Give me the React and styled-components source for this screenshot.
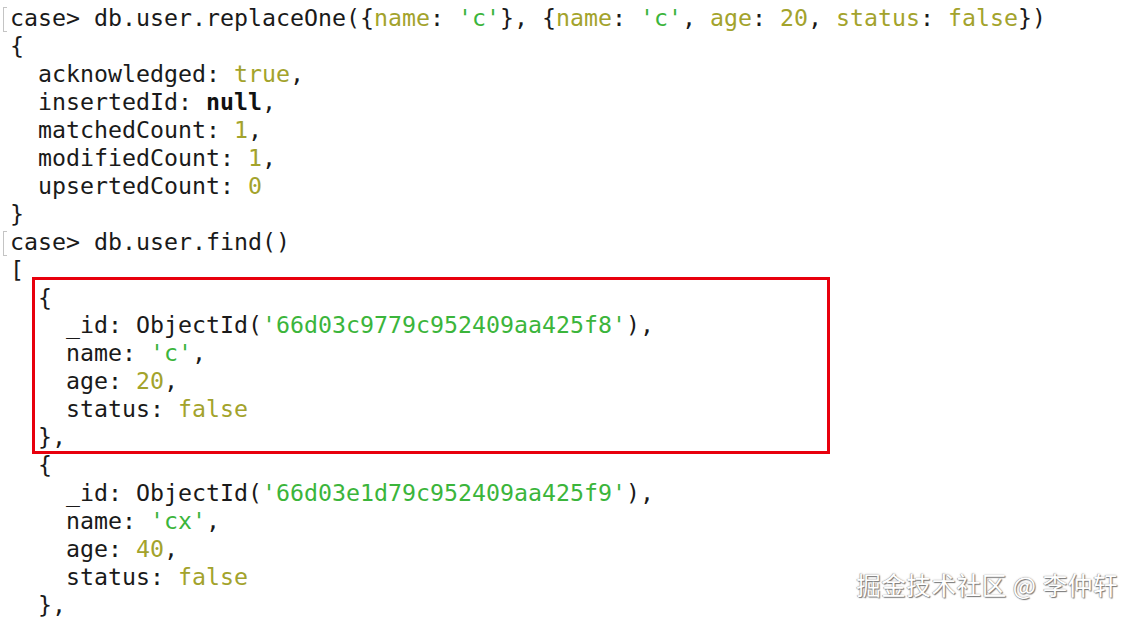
import React from 'react';
import styled, { createGlobalStyle } from 'styled-components';

const GlobalStyle = createGlobalStyle`
  html, body {
    margin: 0;
    padding: 0;
    background: #ffffff;
  }
`

const Page = styled.div`
  position: relative;
  width: 1136px;
  height: 618px;
  overflow: hidden;
  background: #ffffff;
`

const Terminal = styled.div`
  font-family: "DejaVu Sans Mono", "Liberation Mono", monospace;
  font-size: 23.25px;
  line-height: 27.95px;
  color: #1a1a1a;
  white-space: pre;
  padding: 4px 0 0 10px;
`

const Line = styled.div`
  position: relative;
  padding-left: ${p => p.$indent || 0}ch;
`

// the little grey bracket the terminal puts next to each prompt
const Mark = styled.span`
  position: absolute;
  left: -7px;
  top: 3px;
  width: 3px;
  height: 23px;
  border: 1.5px solid #c4c4c4;
  border-right: none;
`

const Highlight = styled.div`
  margin: -7px 0 -3px 22px;
  width: 789px;
  padding: 4px 0 0 3px;
  border: 3px solid #e8000d;
`

const Yellow = styled.span`
  color: #a3a32c;
`
const Green = styled.span`
  color: #3bb53b;
`
const Bold = styled.span`
  font-weight: bold;
  color: #111;
`

const Watermark = styled.div`
  position: absolute;
  right: 18px;
  bottom: 19px;
  font-family: "Noto Sans CJK SC", "Noto Sans", sans-serif;
  font-size: 24.5px;
  line-height: 28px;
  color: #ffffff;
  text-shadow: 1px 1px 1px #777, -0.5px -0.5px 0.5px #999, 0 0 2px #aaa;
  letter-spacing: 0.6px;
`

function Doc({ id, name, age }) {
  return (
    <>
      <Line>{'{'}</Line>
      <Line $indent={2}>_id: ObjectId(<Green>'{id}'</Green>),</Line>
      <Line $indent={2}>name: <Green>'{name}'</Green>,</Line>
      <Line $indent={2}>age: <Yellow>{age}</Yellow>,</Line>
      <Line $indent={2}>status: <Yellow>false</Yellow></Line>
      <Line>{'},'}</Line>
    </>
  )
}

export default function App() {
  return (
    <Page>
      <GlobalStyle />
      <Terminal>
        <Line>
          <Mark />
          case&gt; db.user.replaceOne({'{'}<Yellow>name</Yellow>: <Green>'c'</Green>{'}'}, {'{'}<Yellow>name</Yellow>: <Green>'c'</Green>, <Yellow>age</Yellow>: <Yellow>20</Yellow>, <Yellow>status</Yellow>: <Yellow>false</Yellow>{'})'}
        </Line>
        <Line>{'{'}</Line>
        <Line $indent={2}>acknowledged: <Yellow>true</Yellow>,</Line>
        <Line $indent={2}>insertedId: <Bold>null</Bold>,</Line>
        <Line $indent={2}>matchedCount: <Yellow>1</Yellow>,</Line>
        <Line $indent={2}>modifiedCount: <Yellow>1</Yellow>,</Line>
        <Line $indent={2}>upsertedCount: <Yellow>0</Yellow></Line>
        <Line>{'}'}</Line>
        <Line>
          <Mark />
          case&gt; db.user.find()
        </Line>
        <Line>[</Line>
        <Highlight>
          <Doc id="66d03c9779c952409aa425f8" name="c" age={20} />
        </Highlight>
        <Line $indent={2}>
          <Doc id="66d03e1d79c952409aa425f9" name="cx" age={40} />
        </Line>
      </Terminal>
      <Watermark>掘金技术社区 @ 李仲轩</Watermark>
    </Page>
  )
}
